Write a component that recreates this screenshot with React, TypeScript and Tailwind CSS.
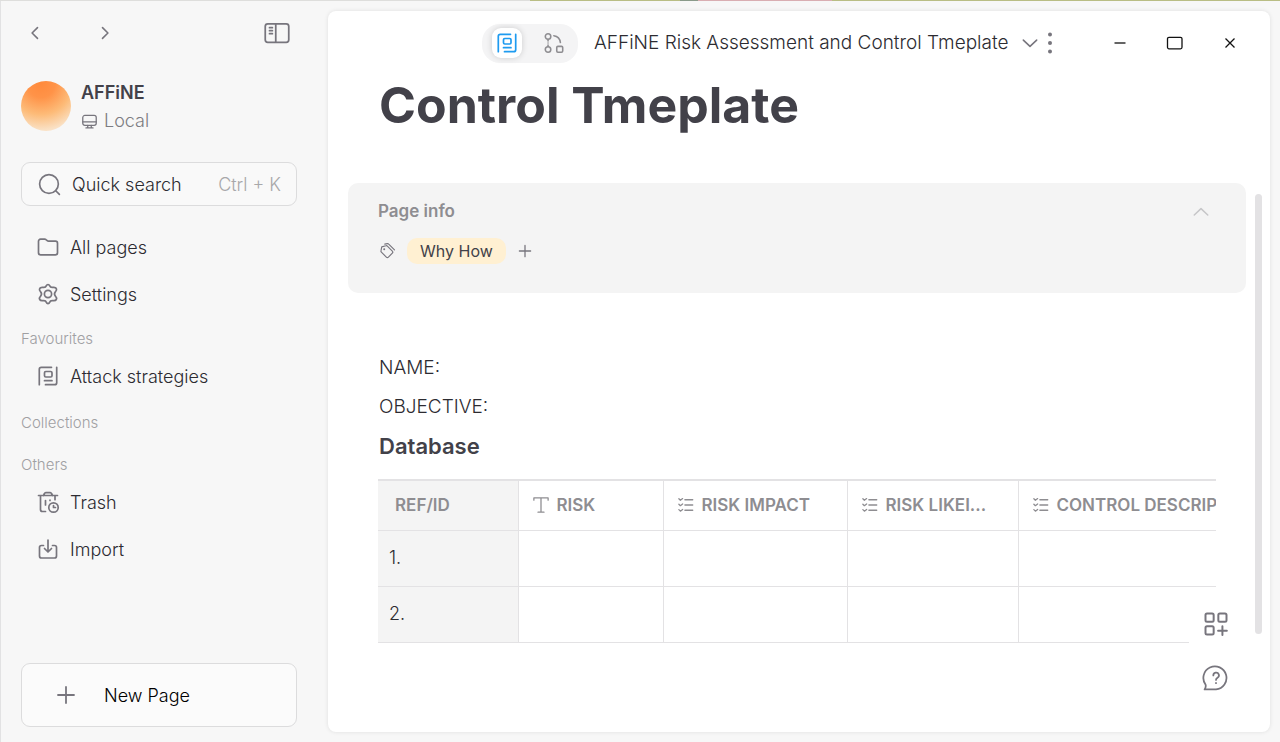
import type { ReactNode } from "react";

function Icon({ size = 24, width = 1.7, className = "", children }: { size?: number; width?: number; className?: string; children: ReactNode }) {
  return (
    <svg
      width={size}
      height={size}
      viewBox="0 0 24 24"
      fill="none"
      stroke="currentColor"
      strokeWidth={width}
      strokeLinecap="round"
      strokeLinejoin="round"
      aria-hidden="true"
      className={`shrink-0 ${className}`}
    >
      {children}
    </svg>
  );
}

const PageIcon = ({ size = 24 }: { size?: number }) => (
  <Icon size={size}>
    <path d="M3.3 20.7V5.300a2 2 0 0 1 2-2H15.500M20.700 3.300v15.400a2 2 0 0 1-2 2H9.500" />
    <rect x="8.500" y="7.500" width="7.500" height="5.500" rx="1.300" />
    <path d="M8.500 16.700h7.500" />
  </Icon>
);

const EdgelessIcon = () => (
  <Icon size={22}>
    <circle cx="5.500" cy="5" r="3" />
    <circle cx="5.500" cy="19" r="3" />
    <rect x="15" y="15.700" width="6.500" height="6.300" rx="1.300" />
    <path d="M5.500 8.200v1.500M5.500 12v.1M5.500 14.300v1.500M11.800 4c4.500.6 6.700 3.200 7.200 7.500" />
  </Icon>
);

const ListIcon = () => (
  <Icon size={18} width={1.700}>
    <path d="M10.500 5H21M10.500 12H21M10.500 19H21M2.500 3.700l2 2 3-2.300M2.500 10.900l2 2 3-2.300M2.500 18.200l2 2 3-2.300" />
  </Icon>
);

const TextIcon = () => (
  <Icon size={18} width={1.700}>
    <path d="M2.500 5.500V2.500h19v3M12 2.500v19M8 21.500h8" />
  </Icon>
);

function NavItem({ icon, children }: { icon: ReactNode; children: ReactNode }) {
  return (
    <a href="#" className="flex h-9 items-center gap-[10px] pl-[15px] text-[18px] text-[#2c2b31]">
      <span className="flex w-6 justify-center text-[#77757d]">{icon}</span>
      {children}
    </a>
  );
}

function SectionLabel({ children }: { children: ReactNode }) {
  return <h2 className="mb-2 text-[15px] leading-[22px] text-[#a0a0a3]">{children}</h2>;
}

function Sidebar() {
  return (
    <aside className="flex w-[328px] shrink-0 flex-col border-l border-[#e2e2e3] pr-[31px] pb-[15px] pl-5">
      <div className="flex h-16 items-center text-[#77757d]">
        <button aria-label="Back" className="-ml-1 flex w-9 justify-center">
          <Icon size={20} width={1.9}><path d="M15 5.5 8.5 12l6.5 6.5" /></Icon>
        </button>
        <button aria-label="Forward" className="ml-[34px] flex w-9 justify-center">
          <Icon size={20} width={1.9}><path d="M9 5.5l6.5 6.5L9 18.5" /></Icon>
        </button>
        <button aria-label="Toggle sidebar" className="mr-[5px] ml-auto">
          <Icon size={30} width={1.4}>
            <rect x="2.600" y="4.600" width="18.800" height="14.800" rx="2" />
            <path d="M11 4.800v14.400M6 7.700h2.300M6 10.100h2.300M6 12.500h2.300" />
          </Icon>
        </button>
      </div>

      <div className="mt-[15px] flex h-[52px] items-center gap-[10px]">
        <span className="size-[50px] shrink-0 rounded-full bg-[radial-gradient(circle_at_40%_5%,#ff8a3c_0%,#ff9348_25%,#fdbb78_55%,#fae0c3_82%,#f8f0e6_100%)]" />
        <div className="flex flex-col pt-0.5">
          <span className="text-[18px] leading-7 font-semibold text-[#424149]">AFFiNE</span>
          <span className="flex items-center gap-[6px] text-[18px] leading-7 text-[#7d7c81]">
            <Icon size={17} width={1.800} className="text-[#77757d]">
              <rect x="2.500" y="3.500" width="19" height="14" rx="3" />
              <path d="M2.500 12.500h19M9.500 17.500v3.500M14.500 17.500v3.500M7 21h10" />
            </Icon>
            Local
          </span>
        </div>
      </div>

      <button className="mt-[30px] flex h-11 shrink-0 items-center rounded-[9px] border border-[#dcdcdd] bg-[#f9f9f9] px-[15px] text-[18px] font-light">
        <Icon size={25} width={1.600} className="text-[#77757d]">
          <circle cx="11.500" cy="11.500" r="9" />
          <path d="m18 18 3.500 3.500" />
        </Icon>
        <span className="ml-[10px] text-[#2c2b31]">Quick search</span>
        <span className="ml-auto text-[#a8a8aa]">Ctrl + K</span>
      </button>

      <nav className="mt-[23px] flex flex-col gap-[11px]">
        <NavItem
          icon={
            <Icon size={24}>
              <path d="M2.500 6.200a2 2 0 0 1 2-2h4.200a2 2 0 0 1 1.300.5l1.200 1a2 2 0 0 0 1.300.5h7a2 2 0 0 1 2 2v9.600a2 2 0 0 1-2 2h-15a2 2 0 0 1-2-2z" />
            </Icon>
          }
        >
          All pages
        </NavItem>
        <NavItem
          icon={
            <Icon size={24}>
              <path d="M10.400 3.600c.6-1.500 2.600-1.500 3.200 0 .5 1.300 1.700 2 3.100 1.800 1.600-.3 2.900-.2 3.600 1.100.7 1.200.1 2.300-.9 3.300-1 1.200-1 3.200 0 4.400 1 1 1.600 2.100.9 3.300-.7 1.300-2 1.400-3.600 1.100-1.400-.2-2.600.5-3.100 1.800-.6 1.500-2.600 1.500-3.200 0-.5-1.300-1.700-2-3.100-1.800-1.600.3-2.900.2-3.600-1.100-.7-1.200-.1-2.300.9-3.300 1-1.200 1-3.200 0-4.400-1-1-1.600-2.100-.9-3.300.7-1.300 2-1.400 3.600-1.100 1.400.2 2.600-.5 3.100-1.800z" />
              <circle cx="12" cy="12" r="3.600" />
            </Icon>
          }
        >
          Settings
        </NavItem>
      </nav>

      <div className="mt-4 flex flex-col">
        <SectionLabel>Favourites</SectionLabel>
        <NavItem icon={<PageIcon />}>Attack strategies</NavItem>
      </div>
      <div className="mt-[18px] flex flex-col gap-3">
        <SectionLabel>Collections</SectionLabel>
        <SectionLabel>Others</SectionLabel>
      </div>
      <div className="flex flex-col gap-[11px]">
        <NavItem
          icon={
            <Icon size={24}>
              <path d="M2.500 5.500h19M7.500 5.500l1-2a1.500 1.500 0 0 1 1.300-.9h4.400a1.500 1.500 0 0 1 1.300.9l1 2M4.500 5.500v14a2 2 0 0 0 2 2h3M19 5.500v4.200M9.500 10.500v4.500M14 10v.5" />
              <circle cx="17.500" cy="17.500" r="4.700" />
              <path d="M17.500 15.500v2h2" />
            </Icon>
          }
        >
          Trash
        </NavItem>
        <NavItem
          icon={
            <Icon size={24}>
              <path d="M7.500 8.500h-2a2 2 0 0 0-2 2v8.500a2 2 0 0 0 2 2h13a2 2 0 0 0 2-2v-8.500a2 2 0 0 0-2-2h-2M12 3v11.500M8.500 11.500l3.500 3.500 3.500-3.500" />
            </Icon>
          }
        >
          Import
        </NavItem>
      </div>

      <button className="mt-auto flex h-16 items-center gap-[26px] rounded-[9px] border border-[#dcdcdd] bg-[#fbfbfb] pl-8 text-[18px] font-light text-black">
        <Icon size={24} width={1.800} className="text-[#77757d]"><path d="M4 12h16M12 4v16" /></Icon>
        New Page
      </button>
    </aside>
  );
}

function Header() {
  return (
    <header className="flex h-16 shrink-0 items-center pr-[13px] pl-[154px]">
      <div className="flex h-[39px] w-24 shrink-0 items-center gap-[17px] rounded-[18px] bg-[#f4f4f5] pl-[10px]">
        <button aria-label="Page mode" className="flex size-[30px] items-center justify-center rounded-[9px] bg-white text-[#1e9bf0] shadow-[0_0_6px_rgba(0,0,0,0.16)]">
          <PageIcon />
        </button>
        <button aria-label="Edgeless mode" className="flex size-[30px] items-center justify-center text-[#8e8d91]">
          <EdgelessIcon />
        </button>
      </div>
      <span className="ml-4 text-[19px] leading-7 whitespace-nowrap text-[#2c2b31]">AFFiNE Risk Assessment and Control Tmeplate</span>
      <button aria-label="Page options" className="ml-3 text-[#77757d]">
        <Icon size={20} width={1.900}><path d="m4 8.500 8 7.500 8-7.500" /></Icon>
      </button>
      <button aria-label="More" className="text-[#77757d]">
        <svg width="20" height="24" viewBox="0 0 20 24" fill="currentColor" aria-hidden="true">
          <circle cx="10" cy="3.500" r="2" />
          <circle cx="10" cy="12" r="2" />
          <circle cx="10" cy="20.500" r="2" />
        </svg>
      </button>
      <div className="ml-auto flex text-[#121212]">
        <button aria-label="Minimize" className="flex w-[55px] justify-center">
          <svg width="18" height="18" fill="none" stroke="currentColor" strokeWidth="1.300"><path d="M3.500 9h11" /></svg>
        </button>
        <button aria-label="Maximize" className="flex w-[55px] justify-center">
          <svg width="18" height="18" fill="none" stroke="currentColor" strokeWidth="1.300"><rect x="1.500" y="3.300" width="14.500" height="11.500" rx="1.500" /></svg>
        </button>
        <button aria-label="Close" className="flex w-[55px] justify-center">
          <svg width="18" height="18" fill="none" stroke="currentColor" strokeWidth="1.300"><path d="m4.500 4.500 9 9m0-9-9 9" /></svg>
        </button>
      </div>
    </header>
  );
}

function PageInfo() {
  return (
    <section className="mt-[47px] mr-6 ml-5 flex h-[110px] shrink-0 flex-col rounded-[10px] bg-[#f4f4f4] pt-4 pr-9 pl-[30px]">
      <div className="flex h-[26px] items-center justify-between">
        <h2 className="text-[17px] font-semibold text-[#8e8d91]">Page info</h2>
        <button aria-label="Collapse page info" className="text-[#c6c6c8]">
          <Icon size={18} width={2}><path d="m3 16 9-8.500 9 8.500" /></Icon>
        </button>
      </div>
      <div className="mt-[13px] flex h-[26px] items-center">
        <Icon size={18} width={1.500} className="text-[#77757d]">
          <path d="M5 6.500 10.500 5a2 2 0 0 1 2 .5l6.600 6.600a2 2 0 0 1 0 2.800l-5.200 5.200a2 2 0 0 1-2.800 0l-6.600-6.600a2 2 0 0 1-.5-2z" />
          <path d="m9 2.800 3.500-.6a2 2 0 0 1 1.800.6l7.700 7.700" />
          <circle cx="8.300" cy="9.800" r="0.600" />
        </Icon>
        <span className="ml-[11px] rounded-[10px] bg-[#fff0d2] px-[13px] text-[16px] leading-[26px] font-normal text-[#424149]">Why How</span>
        <button aria-label="Add tag" className="ml-[10px] text-[#77757d]">
          <Icon size={18} width={1.700}><path d="M4.500 12h15M12 4.500v15" /></Icon>
        </button>
      </div>
    </section>
  );
}

const columns = [
  { name: "REF/ID", icon: null },
  { name: "RISK", icon: <TextIcon /> },
  { name: "RISK IMPACT", icon: <ListIcon /> },
  { name: "RISK LIKEI...", icon: <ListIcon /> },
  { name: "CONTROL DESCRIPTION", icon: <ListIcon /> },
];

function Database() {
  return (
    <div className="overflow-hidden">
      <table className="w-full min-w-[920px] table-fixed border-collapse">
        <colgroup>
          <col className="w-[140px]" />
          <col className="w-[145px]" />
          <col className="w-[184px]" />
          <col className="w-[171px]" />
          <col />
        </colgroup>
        <thead>
          <tr className="h-[50px] border-t-2 border-b border-[#e3e2e4]">
            {columns.map((c) => (
              <th key={c.name} className="border-r border-[#e3e2e4] p-0 text-left text-[17px] font-semibold text-[#8e8d91] first:bg-[#f4f4f4]">
                {c.icon ? (
                  <span className="flex items-center gap-[7px] pl-[13px] whitespace-nowrap">{c.icon}{c.name}</span>
                ) : (
                  <span className="block pl-[17px]">{c.name}</span>
                )}
              </th>
            ))}
          </tr>
        </thead>
        <tbody>
          {["1.", "2."].map((id) => (
            <tr key={id} className="h-14 border-b border-[#e3e2e4]">
              <td className="border-r border-[#e3e2e4] bg-[#f4f4f4] p-0 pl-[11px] text-[18px] leading-7 font-light text-[#2c2b31]">{id}</td>
              <td className="border-r border-[#e3e2e4]" />
              <td className="border-r border-[#e3e2e4]" />
              <td className="border-r border-[#e3e2e4]" />
              <td />
            </tr>
          ))}
        </tbody>
      </table>
    </div>
  );
}

function DesktopEdge() {
  return (
    <div className="flex h-px bg-[#dededc]" aria-hidden="true">
      <span className="ml-[530px] w-[150px] bg-[#b9bd84]" />
      <span className="w-[18px] bg-[#8a9a8a]" />
      <span className="w-[134px] bg-[#d9aeb2]" />
      <span className="flex-1 bg-[#b9bd84]" />
    </div>
  );
}

export default function App() {
  return (
    <div className="flex min-h-screen flex-col bg-[#f7f7f7] font-['Inter',sans-serif] font-light">
      <DesktopEdge />
      <div className="flex flex-1">
        <Sidebar />
        <main className="relative mt-[10px] mr-[10px] mb-[10px] flex min-w-0 flex-1 flex-col rounded-lg bg-white shadow-[0_0_4px_rgba(0,0,0,0.1)]">
          <Header />
          <h1 className="pl-[51px] text-[50px] leading-[61px] font-bold text-[#424149]">Control Tmeplate</h1>
          <PageInfo />
          <article className="mt-[55px] mr-[54px] ml-[50px] text-[#2c2b31]">
            <p className="pl-px text-[19px] leading-[39px]">NAME:</p>
            <p className="pl-px text-[19px] leading-[39px]">OBJECTIVE:</p>
            <h2 className="mb-[13px] pl-px text-[22px] leading-[40px] font-semibold text-[#424149]">Database</h2>
            <Database />
          </article>
          <div className="absolute top-[183px] right-2 h-[440px] w-[7px] rounded-full bg-[#e3e2e4]" />
          <div className="absolute right-[27px] bottom-[27px] flex flex-col">
            <button aria-label="Add block" className="flex size-[54px] items-center justify-center bg-white text-[#77757d]">
              <Icon size={28} width={1.700}>
                <rect x="3" y="3" width="7" height="7" rx="1.300" />
                <rect x="14" y="3" width="7" height="7" rx="1.300" />
                <rect x="3" y="14" width="7" height="7" rx="1.300" />
                <path d="M17.500 14v7.500M13.800 17.800h7.500" />
              </Icon>
            </button>
            <button aria-label="Help" className="flex size-[54px] items-center justify-center text-[#77757d]">
              <Icon size={28} width={1.500}>
                <path d="M2.200 21.800c.9-1.200 1.300-2.300.9-4A9.900 9.900 0 1 1 12 21.800z" />
                <path d="M9.700 9.800a2.400 2.400 0 1 1 3.600 2c-.8.500-1.300 1-1.300 1.900M12 16.200v.2" />
              </Icon>
            </button>
          </div>
        </main>
      </div>
    </div>
  );
}
